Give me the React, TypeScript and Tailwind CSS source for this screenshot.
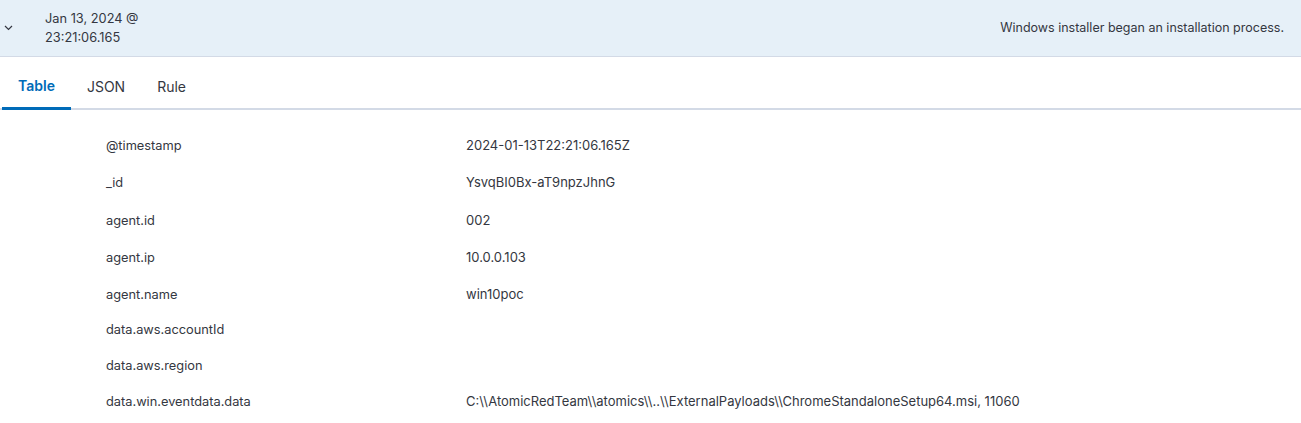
import React from "react";

const rows: [string, string, number][] = [
  ["@timestamp", "2024-01-13T22:21:06.165Z", 37],
  ["_id", "YsvqBI0Bx-aT9npzJhnG", 38],
  ["agent.id", "002", 37],
  ["agent.ip", "10.0.0.103", 37],
  ["agent.name", "win10poc", 35],
  ["data.aws.accountId", "", 36],
  ["data.aws.region", "", 36],
  ["data.win.eventdata.data", "C:\\\\AtomicRedTeam\\\\atomics\\\\..\\\\ExternalPayloads\\\\ChromeStandaloneSetup64.msi, 11060", 36],
];

const App = () => {
  return (
    <div className="w-[1301px] h-[423px] bg-white text-[#343741] font-['Inter',sans-serif] text-[13px] overflow-hidden">
      <div className="flex items-center h-[57px] bg-[#e6f0f8] border-b border-[#d3dae6]">
        <div className="w-[45px] flex justify-start pl-[4px]">
          <svg width="9" height="6" viewBox="0 0 9 6" fill="none">
            <path d="M1 1l3.5 3.5L8 1" stroke="#343741" strokeWidth="1.2" />
          </svg>
        </div>
        <div className="leading-[19px] w-[140px] text-[12.8px]">
          Jan 13, 2024 @
          <br />
          23:21:06.165
        </div>
        <div className="flex-1 text-right pr-[17px] text-[12.5px]">
          Windows installer began an installation process.
        </div>
      </div>
      <div className="flex h-[53px] border-b-2 border-[#d3dae6] px-[2px] text-[14px]">
        <div className="px-[16px] pt-[7px] flex items-center font-semibold text-[#006bb8] border-b-[3px] border-[#006bb8] -mb-[2px]">
          Table
        </div>
        <div className="px-[16px] pt-[7px] flex items-center">JSON</div>
        <div className="px-[16px] pt-[7px] flex items-center">Rule</div>
      </div>
      <div className="pt-[18px]">
        {rows.map(([k, v, h]) => (
          <div key={k} className="flex items-start pt-[8px]" style={{ height: h }}>
            <div className="pl-[106px] w-[466px] text-[12.8px]">{k}</div>
            <div>{v}</div>
          </div>
        ))}
      </div>
    </div>
  );
};

export default App;
